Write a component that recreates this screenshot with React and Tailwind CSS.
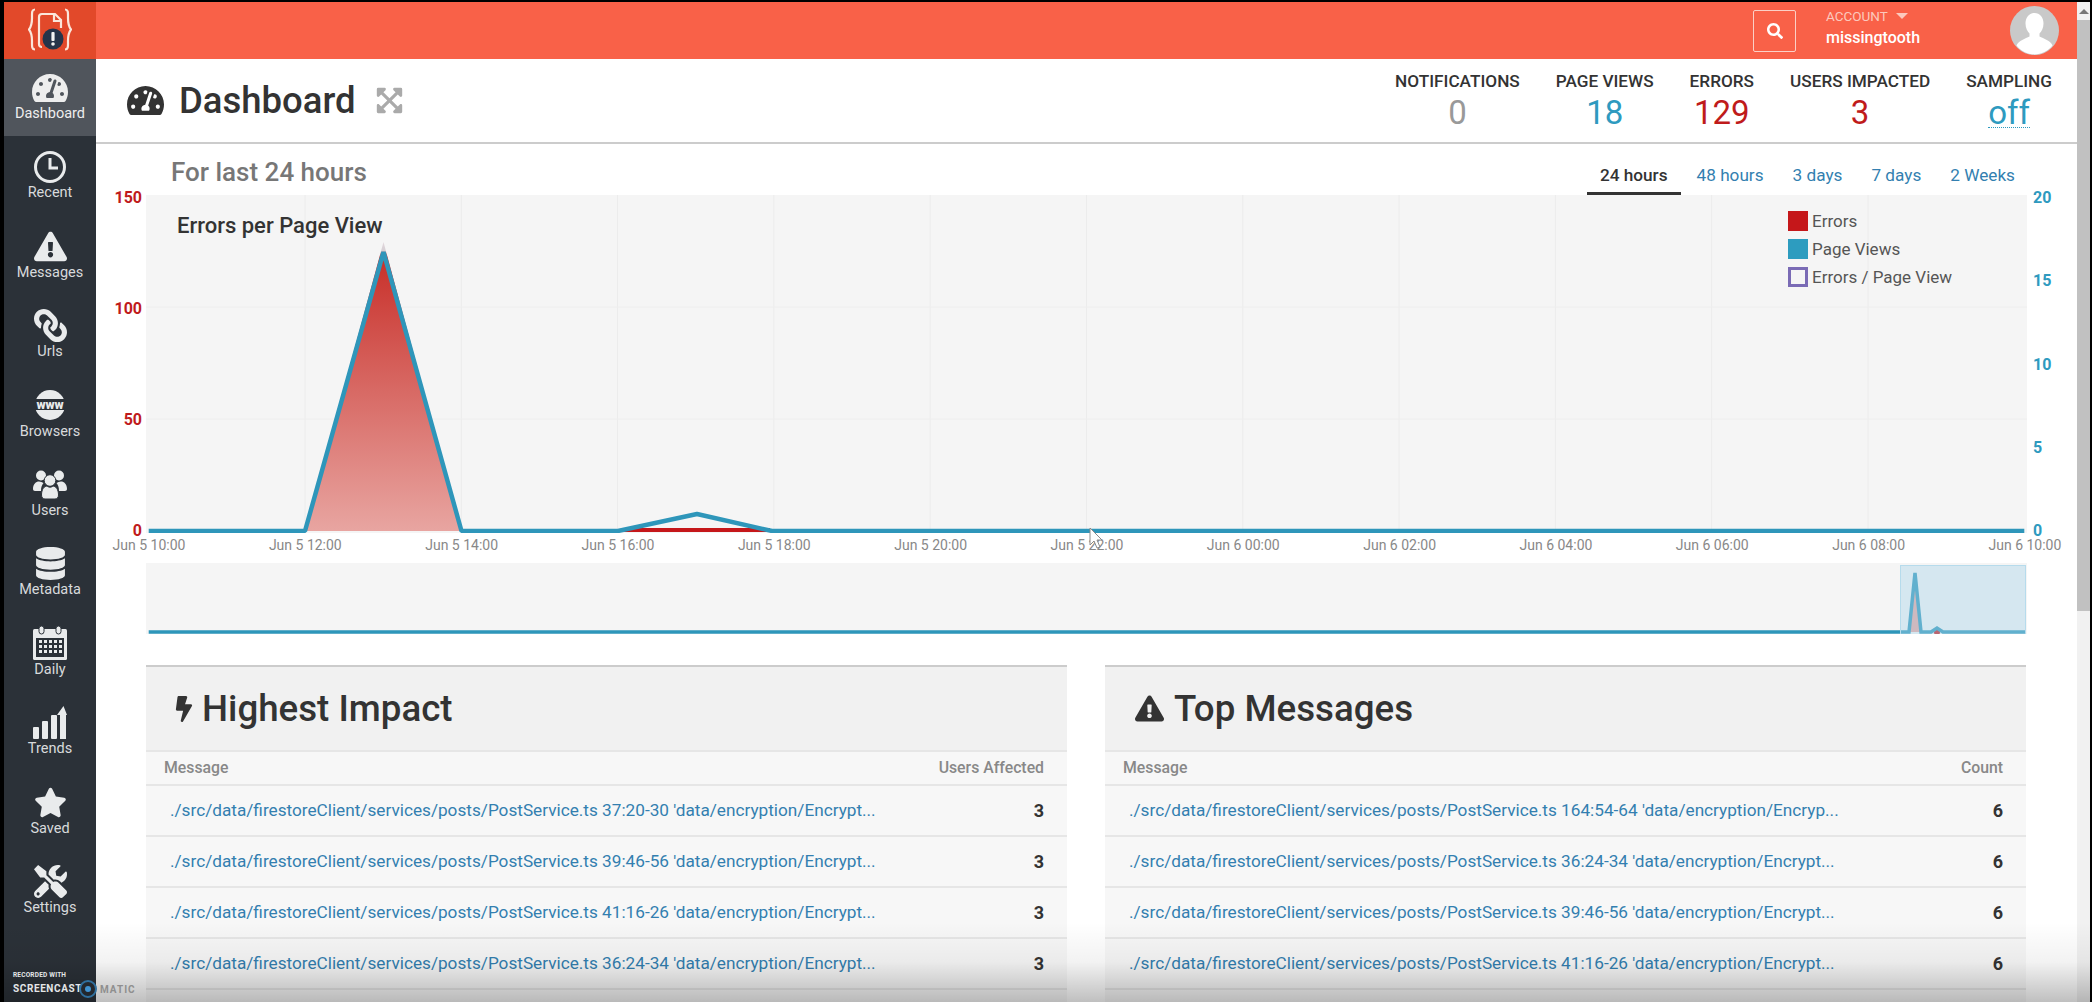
import React from 'react';
import {
  FaBolt,
  FaDatabase,
  FaExclamationTriangle,
  FaExpandArrowsAlt,
  FaLink,
  FaSearch,
  FaStar,
  FaTachometerAlt,
  FaTools,
} from 'react-icons/fa';

const ClockIcon = () => (
  <svg width="34" height="34" viewBox="0 0 34 34" fill="none" stroke="currentColor">
    <circle cx="17" cy="17" r="14.5" strokeWidth="3" />
    <path d="M17 8v10h8" strokeWidth="3" />
  </svg>
);

const WwwIcon = () => (
  <svg width="34" height="30" viewBox="0 0 34 30">
    <circle cx="17" cy="15" r="15" fill="#e9ebec" />
    <rect x="0" y="9" width="34" height="11" fill="#2b3138" />
    <text x="17" y="18.5" textAnchor="middle" fontFamily="Roboto, sans-serif" fontWeight="900" fontSize="12.5" fill="#e9ebec">
      www
    </text>
  </svg>
);

const UsersIcon = () => (
  <svg width="34" height="29" viewBox="0 0 34 29" fill="currentColor">
    <circle cx="8" cy="5.500" r="5" />
    <circle cx="26" cy="5.500" r="5" />
    <path d="M0 19c0-5 3-7.500 6-7.500 2 0 3 .8 4.500 1.500-1.500 2-2.500 4-2.500 8H2c-1.200 0-2-.8-2-2z" />
    <path d="M34 19c0-5-3-7.500-6-7.500-2 0-3 .8-4.500 1.500 1.500 2 2.500 4 2.500 8h6c1.200 0 2-.8 2-2z" />
    <circle cx="17" cy="10.500" r="5.800" stroke="#2b3138" strokeWidth="1" />
    <path d="M8.500 25c0-6 3-9 5.500-9 1 .8 2 1.200 3 1.200s2-.4 3-1.200c2.500 0 5.500 3 5.500 9 0 2.500-1.500 4-3.500 4H12c-2 0-3.500-1.500-3.500-4z" stroke="#2b3138" strokeWidth="1" />
  </svg>
);

const CalendarIcon = () => (
  <svg width="34" height="34" viewBox="0 0 34 34">
    <rect x="0" y="3" width="34" height="31" rx="1.500" fill="#e9ebec" />
    <rect x="3" y="12" width="28" height="19" fill="#2b3138" />
    <rect x="6" y="0" width="5" height="8" rx="2.500" fill="#e9ebec" stroke="#2b3138" />
    <rect x="23" y="0" width="5" height="8" rx="2.500" fill="#e9ebec" stroke="#2b3138" />
    {[14, 19, 24].flatMap((y) =>
      [6, 11, 16, 21, 26].map((x) => (
        <rect key={`${x}-${y}`} x={x} y={y} width="3" height="3" fill="#e9ebec" />
      )),
    )}
  </svg>
);

const TrendsIcon = () => (
  <svg width="34" height="33" viewBox="0 0 34 33" fill="currentColor">
    <rect x="0" y="21" width="6" height="12" rx="1" />
    <rect x="9" y="15" width="6" height="18" rx="1" />
    <rect x="18" y="9" width="6" height="24" rx="1" />
    <path d="M27 33V9h-3l6.500-9L34 9h-1v24z" />
  </svg>
);

const Logo = () => (
  <svg width="44" height="44" viewBox="0 0 44 44" fill="none">
    <g stroke="#fbe6da" strokeWidth="2.200">
      <path d="M7 1.500C3.500 1.500 4 5 4 10c0 6-1 9-3 11.500C3 24 4 27 4 33c0 5-.5 8.500 3 8.500" />
      <path d="M37 1.500c3.500 0 3 3.500 3 8.500 0 6 1 9 3 11.500-2 2.500-3 5.500-3 11.500 0 5 .5 8.500-3 8.500" />
      <path d="M14 39c-2 0-3-1-3-3V9c0-2 1-3 3-3h13l6 6v8" />
      <path d="M26 6v7h7" />
    </g>
    <circle cx="25" cy="31" r="10.500" fill="#26344a" />
    <rect x="23.400" y="24" width="3.200" height="9" rx="1" fill="#f4f4f4" />
    <circle cx="25" cy="36" r="1.800" fill="#f4f4f4" />
  </svg>
);

const Avatar = () => (
  <svg width="49" height="49" viewBox="0 0 49 49">
    <circle cx="24.500" cy="24.500" r="24.500" fill="#c9c9c9" />
    <path d="M24.500 7c5.500 0 9 4.500 9 10.500 0 4.500-2 8-4 10v3c4 2 11 4 13 9-4.500 5.500-11 9-18 9s-13.500-3.500-18-9c2-5 9-7 13-9v-3c-2-2-4-5.500-4-10C15.500 11.500 19 7 24.500 7z" fill="#fff" />
  </svg>
);

const navItems = [
  { label: 'Recent', icon: <ClockIcon /> },
  { label: 'Messages', icon: <FaExclamationTriangle size={33} /> },
  { label: 'Urls', icon: <FaLink size={33} className="-scale-x-100" /> },
  { label: 'Browsers', icon: <WwwIcon /> },
  { label: 'Users', icon: <UsersIcon /> },
  { label: 'Metadata', icon: <FaDatabase size={33} /> },
  { label: 'Daily', icon: <CalendarIcon /> },
  { label: 'Trends', icon: <TrendsIcon /> },
  { label: 'Saved', icon: <FaStar size={33} /> },
  { label: 'Settings', icon: <FaTools size={33} /> },
];

const stats = [
  { label: 'NOTIFICATIONS', value: '0', color: 'text-[#999999]' },
  { label: 'PAGE VIEWS', value: '18', color: 'text-[#2e9abf]' },
  { label: 'ERRORS', value: '129', color: 'text-[#bf1b1b]' },
  { label: 'USERS IMPACTED', value: '3', color: 'text-[#bf1b1b]' },
];

const tabs = ['48 hours', '3 days', '7 days', '2 Weeks'];

const xLabels = [
  'Jun 5 10:00', 'Jun 5 12:00', 'Jun 5 14:00', 'Jun 5 16:00', 'Jun 5 18:00', 'Jun 5 20:00', 'Jun 5 22:00',
  'Jun 6 00:00', 'Jun 6 02:00', 'Jun 6 04:00', 'Jun 6 06:00', 'Jun 6 08:00', 'Jun 6 10:00',
];

const gridX = [159, 315.3, 471.6, 627.9, 784.2, 940.5, 1096.8, 1253.1, 1409.4, 1565.7, 1722];

const impactRows = [
  "./src/data/firestoreClient/services/posts/PostService.ts 37:20-30 'data/encryption/Encrypt...",
  "./src/data/firestoreClient/services/posts/PostService.ts 39:46-56 'data/encryption/Encrypt...",
  "./src/data/firestoreClient/services/posts/PostService.ts 41:16-26 'data/encryption/Encrypt...",
  "./src/data/firestoreClient/services/posts/PostService.ts 36:24-34 'data/encryption/Encrypt...",
];

const messageRows = [
  "./src/data/firestoreClient/services/posts/PostService.ts 164:54-64 'data/encryption/Encryp...",
  "./src/data/firestoreClient/services/posts/PostService.ts 36:24-34 'data/encryption/Encrypt...",
  "./src/data/firestoreClient/services/posts/PostService.ts 39:46-56 'data/encryption/Encrypt...",
  "./src/data/firestoreClient/services/posts/PostService.ts 41:16-26 'data/encryption/Encrypt...",
];

const NavItem = ({ label, icon }) => (
  <div className="flex h-[79.4px] flex-col items-center pt-[11px] text-[#e9ebec]">
    <div className="flex h-[35px] items-center justify-center">{icon}</div>
    <span className="text-[14.5px] leading-[18px] text-[#d8dadc]">{label}</span>
  </div>
);

const MainChart = () => (
  <svg width="1881" height="338" viewBox="0 0 1881 338" className="block">
    <defs>
      <linearGradient id="errorFill" x1="0" y1="0" x2="0" y2="1">
        <stop offset="0" stopColor="#e2d8dc" />
        <stop offset="0.03" stopColor="#d6cfd4" />
        <stop offset="0.05" stopColor="#c8302a" />
        <stop offset="1" stopColor="#e8a5a1" />
      </linearGradient>
    </defs>
    {gridX.map((x) => (
      <line key={x} x1={x} x2={x} y1="0" y2="336" stroke="#ececec" strokeWidth="1" />
    ))}
    <line x1="0" x2="1881" y1="112" y2="112" stroke="#eeeeee" />
    <line x1="0" x2="1881" y1="224" y2="224" stroke="#eeeeee" />
    <polygon points="159,336 237.500,47 315.500,336" fill="url(#errorFill)" />
    <line x1="476" x2="624" y1="335" y2="335" stroke="#c5171a" strokeWidth="4" />
    <polyline
      points="2.700,336 159,336 237.500,57 315.500,336 472,336 551,319 626,336 1878.300,336"
      fill="none"
      stroke="#2e96ba"
      strokeWidth="4.500"
      strokeLinejoin="bevel"
    />
  </svg>
);

const MiniChart = () => (
  <svg width="1881" height="71" viewBox="0 0 1881 71" className="block">
    <polygon points="1763,69 1769,10 1775,69" fill="#e8a5a1" />
    <circle cx="1791" cy="69" r="3" fill="#c5171a" />
    <polyline
      points="2.700,69 1757,69 1763,69 1769,10 1775,69 1785,69 1791,65 1797,69 1879.500,69"
      fill="none"
      stroke="#2e96ba"
      strokeWidth="3.500"
    />
    <rect x="1754.500" y="2.500" width="125" height="69" fill="#a9d3ea" fillOpacity="0.42" stroke="#b6dbec" />
  </svg>
);

const Panel = ({ icon, title, column, rows, value }) => (
  <div className="h-[337px] border-t-2 border-[#cccccc] bg-[#f7f7f7]">
    <div className="flex h-[83px] items-center gap-[10px] bg-[#f1f1f1] pl-[30px] text-[#333333]">
      {icon}
      <h2 className="text-[36.7px] leading-[40px] font-medium">{title}</h2>
    </div>
    <div className="flex h-[36px] items-center justify-between border-y-2 border-[#e6e6e6] pr-[23px] pl-[18px] text-[15.8px] font-medium text-[#888888]">
      <span>Message</span>
      <span>{column}</span>
    </div>
    {rows.map((row) => (
      <div key={row} className="flex h-[51px] items-center justify-between border-b-2 border-[#e6e6e6] pr-[23px] pl-[24px]">
        <a className="text-[17.2px] text-[#337fb0]">{row}</a>
        <span className="text-[18px] font-bold text-[#333333]">{value}</span>
      </div>
    ))}
  </div>
);

const App = () => {
  return (
    <div className="relative flex h-[1002px] w-[2092px] overflow-hidden bg-black pt-[2px] pr-[2px] pl-[4px] font-['Roboto',sans-serif]">
      {/* Sidebar */}
      <aside className="w-[92px] shrink-0 bg-[#2b3138]">
        <div className="flex h-[57px] items-center justify-center bg-[#e2492a] pb-[1px]">
          <Logo />
        </div>
        <div className="mb-[2.4px] flex h-[77px] flex-col items-center bg-[#50555c] pt-[11px] text-[#eeeeee]">
          <div className="flex h-[35px] items-center justify-center">
            <FaTachometerAlt size={36} />
          </div>
          <span className="text-[14.5px] leading-[18px]">Dashboard</span>
        </div>
        {navItems.map((item) => (
          <NavItem key={item.label} label={item.label} icon={item.icon} />
        ))}
      </aside>

      <main className="w-[1981px] shrink-0 overflow-hidden bg-white">
        {/* Top bar */}
        <header className="flex h-[57px] items-center justify-end bg-[#f96148] pr-[18px] text-white">
          <button className="flex h-[42px] w-[43px] items-center justify-center rounded-[2px] border border-[#fbd0c6]">
            <FaSearch size={16} />
          </button>
          <div className="mr-[82px] mb-[3px] ml-[30px] w-[102px]">
            <div className="flex items-center gap-[8px] text-[13.5px] leading-[18px] text-[#fcc9bd]">
              ACCOUNT
              <span className="h-0 w-0 border-x-[6px] border-t-[6px] border-x-transparent border-t-[#fcc9bd]" />
            </div>
            <div className="text-[16px] leading-[26px] font-medium">missingtooth</div>
          </div>
          <Avatar />
        </header>

        {/* Page title and stats */}
        <div className="flex h-[85px] items-center justify-between border-b-2 border-[#cccccc] pr-[25px] pl-[31px]">
          <div className="flex items-center text-[#333333]">
            <FaTachometerAlt size={37} />
            <h1 className="ml-[15px] text-[36.5px] leading-[44px] font-medium">Dashboard</h1>
            <FaExpandArrowsAlt size={29} className="ml-[19px] text-[#aaaaaa]" />
          </div>
          <div className="flex gap-[36px] pt-[3px] text-center">
            {stats.map((stat) => (
              <div key={stat.label}>
                <div className="text-[17.2px] leading-[22px] font-medium text-[#333333]">{stat.label}</div>
                <div className={`text-[33px] leading-[42px] ${stat.color}`}>{stat.value}</div>
              </div>
            ))}
            <div>
              <div className="text-[17.2px] leading-[22px] font-medium text-[#333333]">SAMPLING</div>
              <span className="inline-block h-[36px] border-b border-dotted border-[#2e9abf] text-[33px] leading-[41px] text-[#2e9abf]">off</span>
            </div>
          </div>
        </div>

        {/* Range tabs */}
        <div className="flex h-[51px] items-end justify-between pr-[49px] pl-[75px]">
          <div className="mb-[8px] text-[26px] leading-[30px] font-medium text-[#777777]">For last 24 hours</div>
          <div className="flex gap-[3px] text-[17.2px] leading-[28px]">
            <span className="h-[34px] border-b-[3px] border-[#333333] px-[13px] font-medium text-[#333333]">24 hours</span>
            {tabs.map((tab) => (
              <span key={tab} className="h-[34px] px-[13px] text-[#337fb0]">
                {tab}
              </span>
            ))}
          </div>
        </div>

        {/* Chart */}
        <div className="flex items-start">
          <div className="-mt-[7px] -mb-[8px] flex h-[353px] w-[50px] flex-col justify-between pr-[4px] text-right text-[16px] leading-[20px] font-bold text-[#bf1b1b]">
            <span>150</span>
            <span>100</span>
            <span>50</span>
            <span>0</span>
          </div>
          <div className="relative h-[338px] w-[1881px] bg-[#f5f5f5]">
            <MainChart />
            <div className="absolute top-[19px] left-[31px] text-[22px] leading-[24px] font-medium text-[#333333]">Errors per Page View</div>
            <div className="absolute top-[16px] left-[1642px] flex flex-col gap-[8px] text-[17px] leading-[20px] text-[#555555]">
              <div className="flex items-center gap-[4px]">
                <span className="h-[20px] w-[20px] bg-[#c5171a]" />
                Errors
              </div>
              <div className="flex items-center gap-[4px]">
                <span className="h-[20px] w-[20px] bg-[#2d9cbf]" />
                Page Views
              </div>
              <div className="flex items-center gap-[4px]">
                <span className="h-[20px] w-[20px] border-[3px] border-[#7a6bb5]" />
                Errors / Page View
              </div>
            </div>
          </div>
          <div className="-mt-[7px] -mb-[8px] flex h-[353px] w-[50px] flex-col justify-between pl-[6px] text-[16px] leading-[20px] font-bold text-[#2e9abf]">
            <span>20</span>
            <span>15</span>
            <span>10</span>
            <span>5</span>
            <span>0</span>
          </div>
        </div>

        <div className="mt-[2px] mr-[12px] ml-[13px] flex h-[20px] justify-between text-[14px] leading-[20px] text-[#888888]">
          {xLabels.map((label) => (
            <span key={label} className="w-[80px] text-center">
              {label}
            </span>
          ))}
        </div>

        {/* Range overview */}
        <div className="mt-[8px] ml-[50px] h-[71px] w-[1881px] bg-[#f5f5f5]">
          <MiniChart />
        </div>

        {/* Tables */}
        <div className="mt-[31px] mr-[51px] ml-[50px] grid grid-cols-2 gap-[38px]">
          <Panel icon={<FaBolt size={26} className="-mx-[5px]" />} title="Highest Impact" column="Users Affected" rows={impactRows} value="3" />
          <Panel icon={<FaExclamationTriangle size={29} />} title="Top Messages" column="Count" rows={messageRows} value="6" />
        </div>
      </main>

      {/* Scrollbar */}
      <div className="flex-1 bg-[#f1f1f1]">
        <div className="flex h-[18px] items-center justify-center">
          <span className="h-0 w-0 border-x-[5px] border-b-[5px] border-x-transparent border-b-[#777777]" />
        </div>
        <div className="h-[591px] bg-[#c1c1c1]" />
      </div>

      {/* Mouse pointer caught by the recording */}
      <svg width="14" height="23" viewBox="0 0 14 23" className="pointer-events-none absolute top-[527px] left-[1089px]">
        <path d="M1 1v17l4-4 3 7 3-1-3-7h5z" fill="#ffffff" stroke="#8a8a8a" strokeWidth="1" />
      </svg>

      {/* Recorder fade and watermark */}
      <div className="pointer-events-none absolute inset-x-0 bottom-0 h-[80px] bg-gradient-to-b from-transparent via-black/5 to-black/25" />
      <div className="pointer-events-none absolute bottom-[4px] left-[13px] text-[#e4e6e8]">
        <div className="text-[6.5px] leading-[10px] font-bold tracking-[0.2px]">RECORDED WITH</div>
        <div className="flex items-center">
          <span className="w-[63px] text-[10px] leading-[18px] font-bold tracking-[0.6px]">SCREENCAST</span>
          <span className="mx-[3px] flex h-[18px] w-[18px] items-center justify-center rounded-full border-2 border-[#2f6f9e]">
            <span className="h-[6px] w-[6px] rounded-full bg-[#3f93d1]" />
          </span>
          <span className="text-[10px] font-bold tracking-[1px] text-[#8f8f8f]">MATIC</span>
        </div>
      </div>
    </div>
  );
};

export default App;
